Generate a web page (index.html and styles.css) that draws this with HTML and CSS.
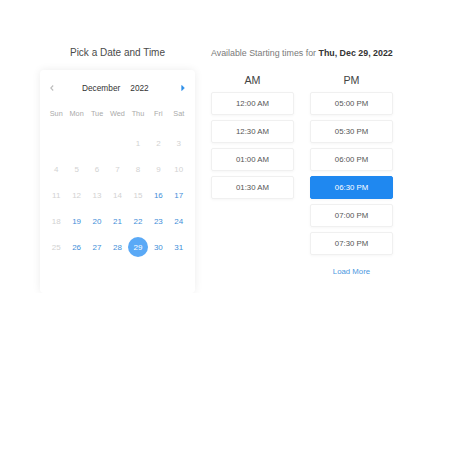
FILE: index.html
```html
<!DOCTYPE html>
<html>
<head>
<meta charset="utf-8">
<link rel="stylesheet" href="styles.css">
</head>
<body>
<div class="page">
  <div class="left">
    <div class="title">Pick a Date and Time</div>
    <div class="card">
      <div class="cal-head">
        <span class="arrow prev"><svg width="6" height="8" viewBox="0 0 6 8"><path d="M4.2 1.5 L1.8 4 L4.2 6.5" fill="none" stroke="#bdbdbd" stroke-width="1.1"/></svg></span>
        <span class="month">December</span>
        <span class="year">2022</span>
        <span class="arrow next"><svg width="6" height="8" viewBox="0 0 6 8"><path d="M1.8 1.5 L4.3 4 L1.8 6.5 Z" fill="#2d8ee8" stroke="#2d8ee8" stroke-width="0.8" stroke-linejoin="round"/></svg></span>
      </div>
      <div class="weekdays">
        <span>Sun</span><span>Mon</span><span>Tue</span><span>Wed</span><span>Thu</span><span>Fri</span><span>Sat</span>
      </div>
      <div class="days">
        <span></span><span></span><span></span><span></span>
        <span class="off">1</span><span class="off">2</span><span class="off">3</span>
        <span class="off">4</span><span class="off">5</span><span class="off">6</span><span class="off">7</span><span class="off">8</span><span class="off">9</span><span class="off">10</span>
        <span class="off">11</span><span class="off">12</span><span class="off">13</span><span class="off">14</span><span class="off">15</span><span class="on">16</span><span class="on">17</span>
        <span class="off">18</span><span class="on">19</span><span class="on">20</span><span class="on">21</span><span class="on">22</span><span class="on">23</span><span class="on">24</span>
        <span class="off">25</span><span class="on">26</span><span class="on">27</span><span class="on">28</span><span class="sel"><b>29</b></span><span class="on">30</span><span class="on">31</span>
      </div>
    </div>
  </div>
  <div class="right">
    <div class="avail">Available Starting times for <strong>Thu, Dec 29, 2022</strong></div>
    <div class="cols">
      <div class="col">
        <div class="col-head">AM</div>
        <div class="slots">
          <div class="slot">12:00 AM</div>
          <div class="slot">12:30 AM</div>
          <div class="slot">01:00 AM</div>
          <div class="slot">01:30 AM</div>
        </div>
      </div>
      <div class="col">
        <div class="col-head">PM</div>
        <div class="slots">
          <div class="slot">05:00 PM</div>
          <div class="slot">05:30 PM</div>
          <div class="slot">06:00 PM</div>
          <div class="slot active">06:30 PM</div>
          <div class="slot">07:00 PM</div>
          <div class="slot">07:30 PM</div>
        </div>
        <div class="more">Load More</div>
      </div>
    </div>
  </div>
</div>
</body>
</html>
```

FILE: styles.css
```css
* { box-sizing: border-box; }
html, body { margin: 0; background: #fff; }
body { font-family: "Liberation Sans", Arial, sans-serif; color: #555; }

.page {
  display: flex;
  gap: 16px;
  padding: 45px 0 0 40px;
}

.left { width: 155px; }

.title {
  text-align: center;
  font-size: 10px;
  line-height: 16px;
  color: #4a4a4a;
  margin-bottom: 9px;
}

.card {
  border-radius: 4px;
  box-shadow: 0 0 8px rgba(0, 0, 0, 0.08);
  padding: 10px 6px 33px;
}

.cal-head {
  display: flex;
  align-items: center;
  height: 16px;
  font-size: 8.3px;
  color: #333;
}
.arrow {
  width: 12px;
  display: flex;
  justify-content: center;
  align-items: center;
}
.month { margin-left: 24px; }
.year { margin-left: 10px; }
.next { margin-left: auto; }

.weekdays {
  display: grid;
  grid-template-columns: repeat(7, 1fr);
  margin-top: 7px;
  height: 20px;
  align-items: center;
  text-align: center;
  font-size: 7.3px;
  color: #aaa;
}

.days {
  display: grid;
  grid-template-columns: repeat(7, 1fr);
  grid-auto-rows: 26px;
  margin-top: 7px;
  text-align: center;
  font-size: 8px;
  align-items: center;
}
.days span { display: flex; justify-content: center; align-items: center; height: 26px; }
.days .off { color: #d2d2d2; }
.days .on { color: #3f8fd9; }
.days .sel b {
  display: flex;
  justify-content: center;
  align-items: center;
  width: 20px;
  height: 20px;
  border-radius: 50%;
  background: #5aa9f6;
  color: #fff;
  font-weight: normal;
}

.right { width: 182px; }

.avail {
  font-size: 8.85px;
  line-height: 16px;
  white-space: nowrap;
  color: #7a7a7a;
}
.avail strong { color: #333; font-weight: bold; }

.cols {
  display: flex;
  gap: 16px;
  margin-top: 11px;
}
.col { width: 83px; }
.col-head {
  text-align: center;
  font-size: 10.7px;
  line-height: 16px;
  color: #444;
  margin-bottom: 4px;
}
.slots {
  display: flex;
  flex-direction: column;
  gap: 5px;
}
.slot {
  height: 23px;
  border: 1px solid #f0f0f0;
  border-radius: 2px;
  box-shadow: 0 1px 3px rgba(0, 0, 0, 0.04);
  text-align: center;
  line-height: 21px;
  font-size: 7.8px;
  color: #555;
}
.slot.active {
  background: #1f88f0;
  border-color: #1f88f0;
  color: #fff;
}
.more {
  margin-top: 11px;
  text-align: center;
  font-size: 7.8px;
  line-height: 12px;
  color: #4b97e0;
}
```
